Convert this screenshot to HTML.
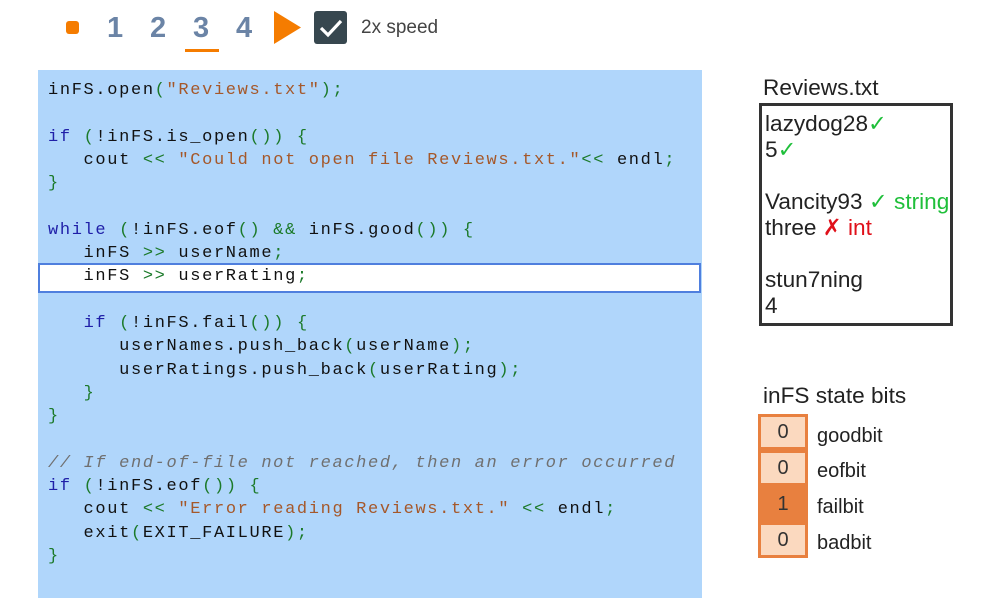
<!DOCTYPE html>
<html><head><style>
body{margin:0;width:984px;height:604px;background:#fff;position:relative;font-family:"Liberation Sans",sans-serif;overflow:hidden}
.a{position:absolute}
.n{font-size:29px;font-weight:bold;color:#6b84a6;top:12px}
pre{margin:0;font-family:"Liberation Mono",monospace;font-size:17px;letter-spacing:1.65px;line-height:23.3px;color:#111}
.k{color:#1f1fa8}.s{color:#a5582a}.p{color:#1c7a2a}.c{color:#707070;font-style:italic}
.ft{font-size:22.6px;color:#222;line-height:26px}
.g{color:#1fbf3a}.r{color:#e0101a}
.cell{position:absolute;left:761px;width:44px;height:30px;background:#fbd9bf;text-align:center;font-size:20px;line-height:30px;color:#333}
.lab{position:absolute;left:817px;font-size:20px;color:#222}
</style></head><body>
<div class="a" style="left:66px;top:21px;width:13px;height:13px;background:#f57c00;border-radius:3px"></div>
<div class="a n" style="left:107px">1</div>
<div class="a n" style="left:150px">2</div>
<div class="a n" style="left:193px">3</div>
<div class="a" style="left:185px;top:49px;width:34px;height:3px;background:#f57c00"></div>
<div class="a n" style="left:236px">4</div>
<svg class="a" style="left:274px;top:11px" width="28" height="33"><polygon points="0,0 27,16.5 0,33" fill="#f57c00"/></svg>
<div class="a" style="left:314px;top:11px;width:33px;height:33px;background:#37474f;border-radius:3px"></div>
<svg class="a" style="left:314px;top:11px" width="33" height="33"><path d="M7 17 L14 24 L27 10" stroke="#fff" stroke-width="3.2" fill="none"/></svg>
<div class="a" style="left:361px;top:17px;font-size:19px;color:#444">2x speed</div>

<div class="a" style="left:38px;top:70px;width:664px;height:528px;background:#b0d6fb"></div>
<div class="a" style="left:38px;top:263px;width:659px;height:26px;background:#fff;border:2px solid #4f7fde"></div>
<pre class="a" style="left:48px;top:79px">inFS.open<span class="p">(</span><span class="s">"Reviews.txt"</span><span class="p">);</span>

<span class="k">if</span> <span class="p">(</span>!inFS.is_open<span class="p">()) {</span>
   cout <span class="p">&lt;&lt;</span> <span class="s">"Could not open file Reviews.txt."</span><span class="p">&lt;&lt;</span> endl<span class="p">;</span>
<span class="p">}</span>

<span class="k">while</span> <span class="p">(</span>!inFS.eof<span class="p">()</span> <span class="p">&amp;&amp;</span> inFS.good<span class="p">()) {</span>
   inFS <span class="p">&gt;&gt;</span> userName<span class="p">;</span>
   inFS <span class="p">&gt;&gt;</span> userRating<span class="p">;</span>

   <span class="k">if</span> <span class="p">(</span>!inFS.fail<span class="p">()) {</span>
      userNames.push_back<span class="p">(</span>userName<span class="p">);</span>
      userRatings.push_back<span class="p">(</span>userRating<span class="p">);</span>
   <span class="p">}</span>
<span class="p">}</span>

<span class="c">// If end-of-file not reached, then an error occurred</span>
<span class="k">if</span> <span class="p">(</span>!inFS.eof<span class="p">()) {</span>
   cout <span class="p">&lt;&lt;</span> <span class="s">"Error reading Reviews.txt."</span> <span class="p">&lt;&lt;</span> endl<span class="p">;</span>
   exit<span class="p">(</span>EXIT_FAILURE<span class="p">);</span>
<span class="p">}</span></pre>

<div class="a" style="left:763px;top:75px;font-size:22.6px;color:#222">Reviews.txt</div>
<div class="a" style="left:759px;top:103px;width:188px;height:217px;border:3px solid #333"></div>
<div class="a ft" style="left:765px;top:111px">lazydog28<span class="g">✓</span><br>5<span class="g">✓</span><br><br>Vancity93 <span class="g">✓ string</span><br>three <span class="r">✗ int</span><br><br>stun7ning<br>4</div>

<div class="a" style="left:763px;top:383px;font-size:22.6px;color:#222">inFS state bits</div>
<div class="a" style="left:758px;top:414px;width:44px;height:138px;border:3px solid #e8803f;background:#e8803f"></div>
<div class="cell" style="top:417px">0</div>
<div class="cell" style="top:453px">0</div>
<div class="cell" style="top:489px;background:#e8803f">1</div>
<div class="cell" style="top:525px">0</div>
<div class="lab" style="top:425px">goodbit</div>
<div class="lab" style="top:460px">eofbit</div>
<div class="lab" style="top:496px">failbit</div>
<div class="lab" style="top:532px">badbit</div>
</body></html>
